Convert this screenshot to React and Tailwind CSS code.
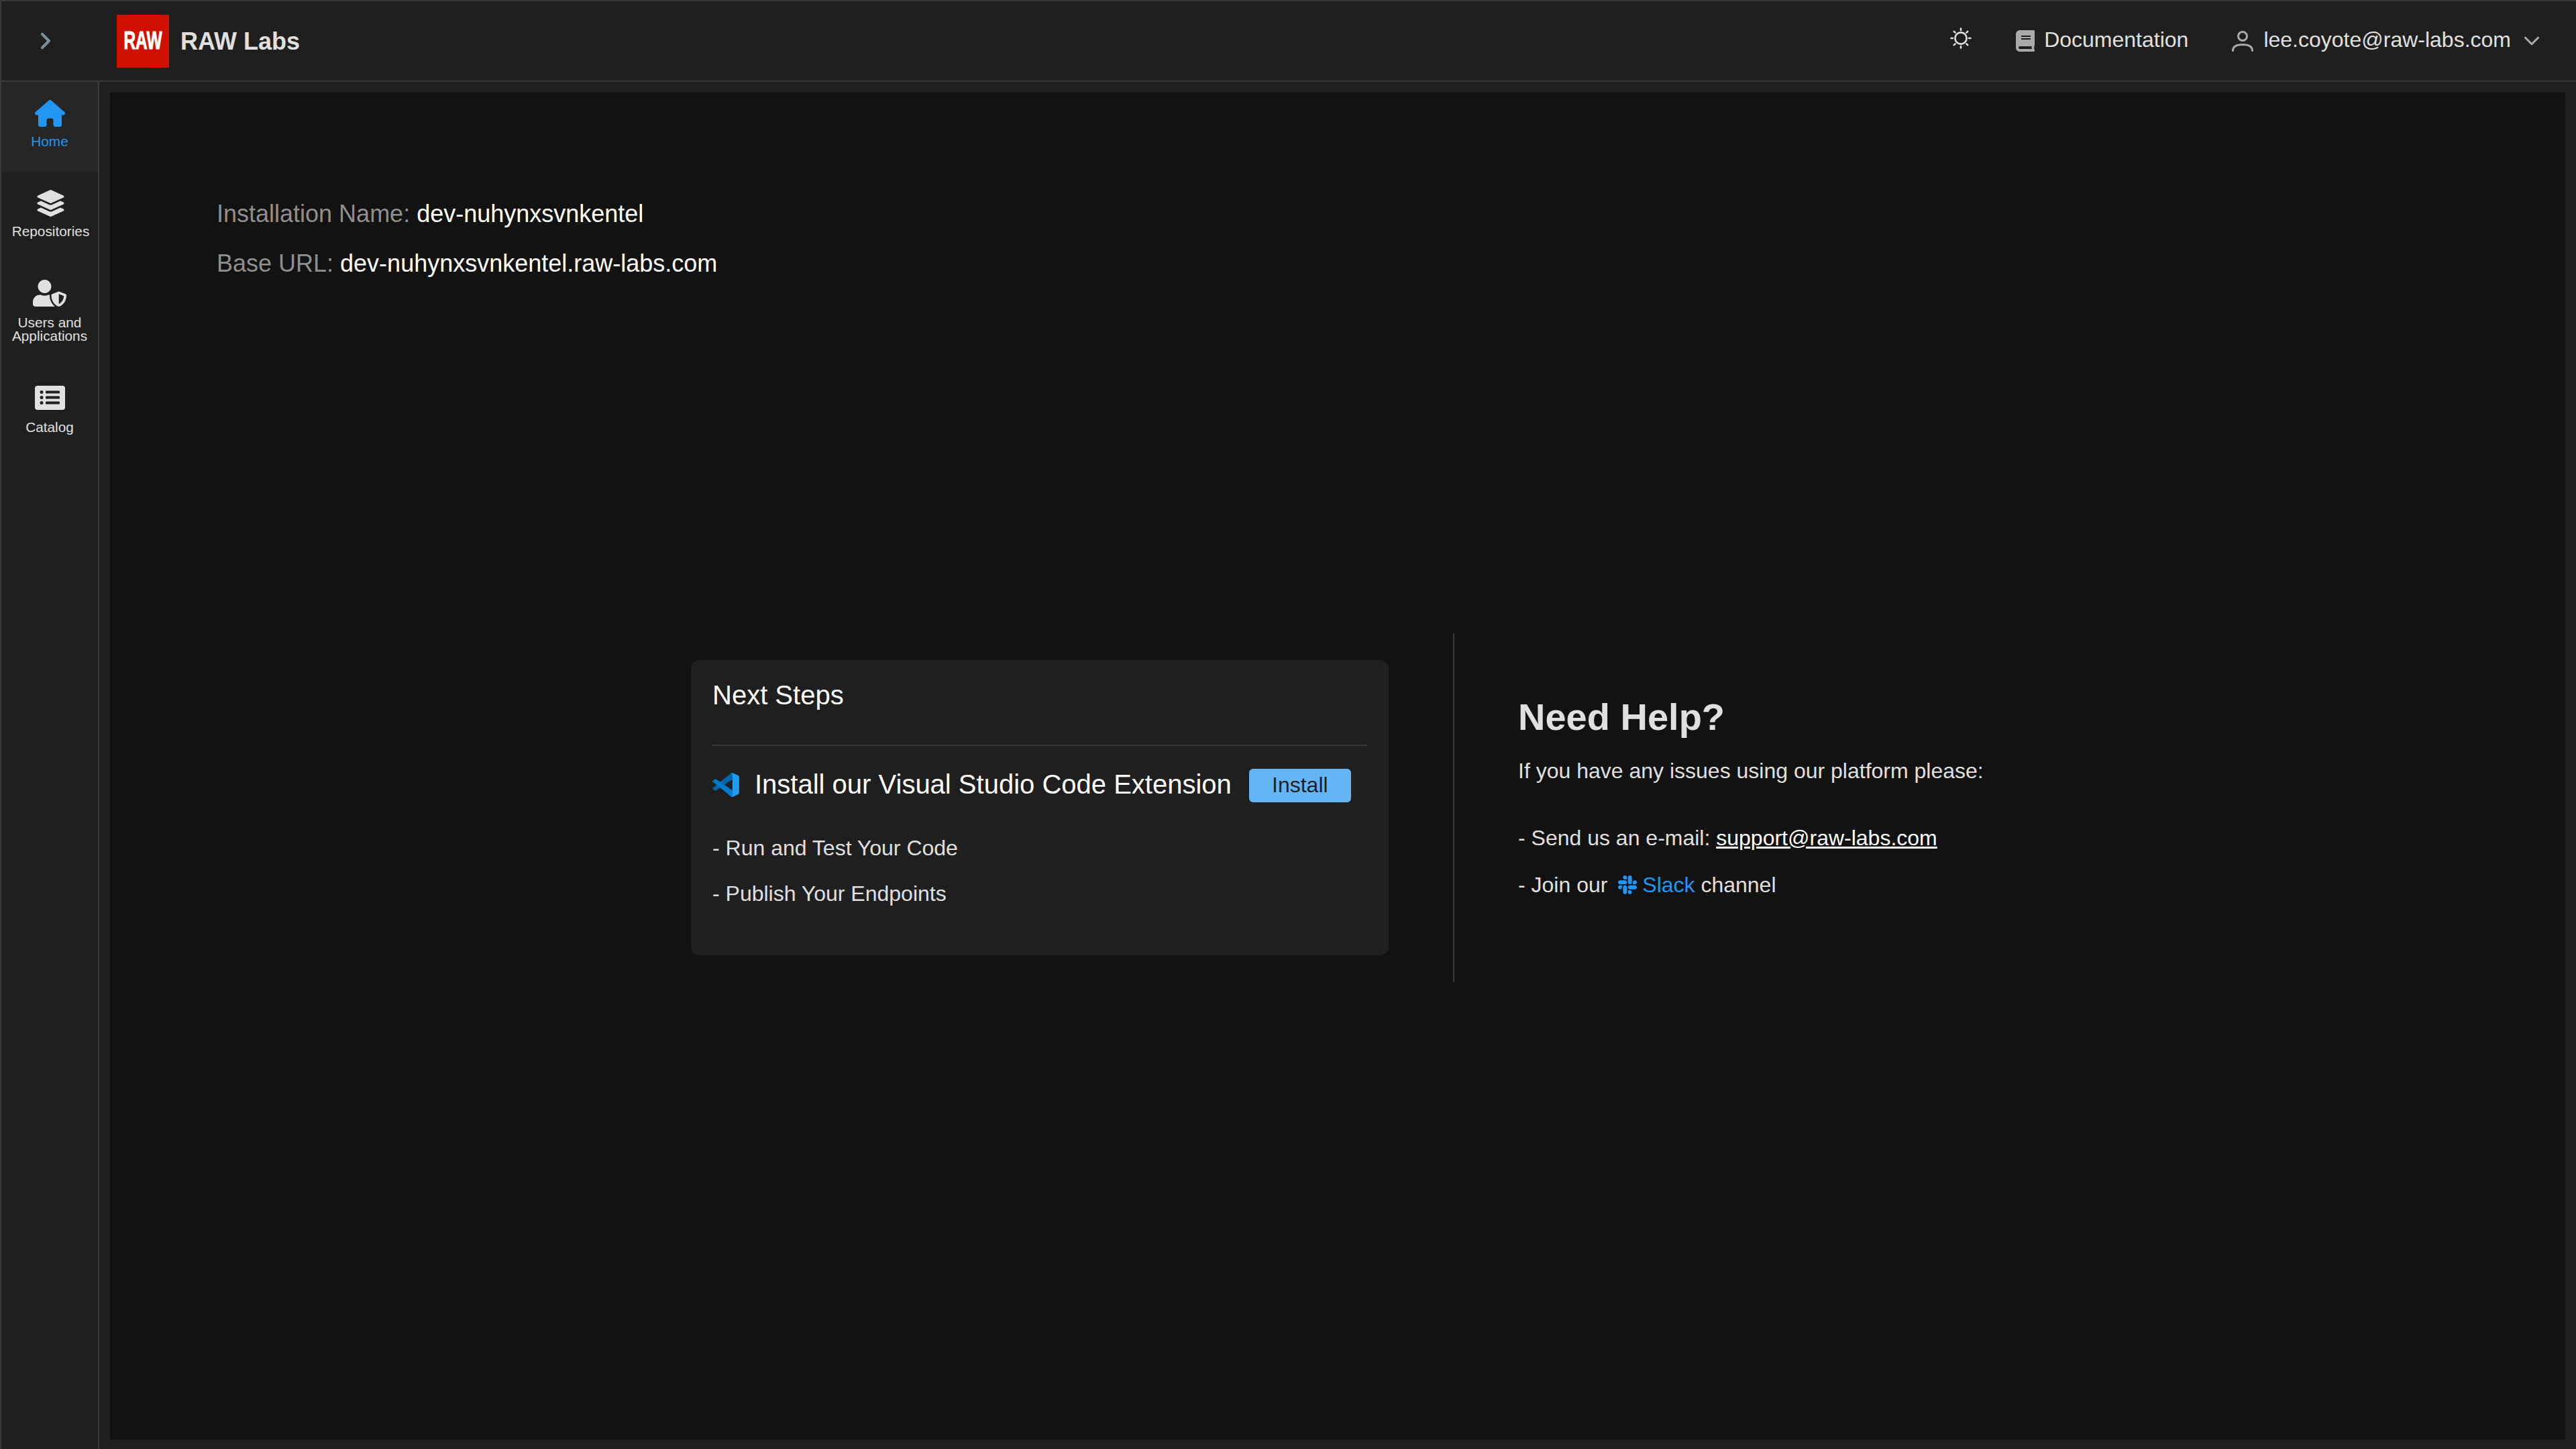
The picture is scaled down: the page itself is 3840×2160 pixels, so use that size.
import React from "react";
import { FaBook, FaLayerGroup, FaSlack, FaUserShield } from "react-icons/fa";
import { FaHouse } from "react-icons/fa6";
import { LuChevronDown, LuChevronRight } from "react-icons/lu";

function VsCodeIcon() {
  return (
    <svg viewBox="0 0 100 100" preserveAspectRatio="none" className="w-[40px] h-[36px] mb-[2px]">
      <path fill="#0065a9" d="M96 10.8 75.4 1a6.2 6.2 0 0 0-7.1 1.2L2.7 62a4.2 4.2 0 0 0 0 6.2l5.5 5a4.2 4.2 0 0 0 5.3.2L94.7 11.9c2.7-2 6.6-.1 6.6 3.3v-.2a6.2 6.2 0 0 0-5.3-4.2z" />
      <path fill="#007acc" d="M96 89.2 75.4 99a6.2 6.2 0 0 1-7.1-1.2L2.7 38a4.2 4.2 0 0 1 0-6.2l5.5-5a4.2 4.2 0 0 1 5.3-.2l81.2 61.5c2.7 2 6.6.1 6.6-3.3v.2a6.2 6.2 0 0 1-5.3 4.2z" />
      <path fill="#1f9cf0" d="M75.4 99a6.2 6.2 0 0 1-7.1-1.2c2.3 2.3 6.2.7 6.2-2.6V4.8c0-3.3-3.9-4.9-6.2-2.6A6.2 6.2 0 0 1 75.4 1L96 10.9a6.2 6.2 0 0 1 3.5 5.6v67a6.2 6.2 0 0 1-3.5 5.6z" />
    </svg>
  );
}

function SunIcon() {
  return (
    <svg viewBox="0 0 32 32" fill="none" stroke="#e0e0e0" strokeWidth="2.6" strokeLinecap="round" className="w-[32px] h-[32px] mb-[8px]">
      <circle cx="16" cy="16" r="8.6" />
      <path d="M16 1.5v2.5M16 28v2.5M1.5 16H4M28 16h2.5M5.8 5.8l1.8 1.8M24.4 24.4l1.8 1.8M5.8 26.2l1.8-1.8M24.4 7.6l1.8-1.8" />
    </svg>
  );
}

function UserIcon() {
  return (
    <svg viewBox="0 0 32 32" fill="none" stroke="#aaaaaa" strokeWidth="3" strokeLinecap="round" className="w-[32px] h-[32px]">
      <circle cx="16" cy="9" r="6.5" />
      <path d="M1.5 30.5C1.5 24 7 21.5 16 21.5S30.5 24 30.5 30.5" />
    </svg>
  );
}

function CatalogIcon() {
  return (
    <svg viewBox="0 0 45 36" className="w-[45px] h-[36px]">
      <rect width="45" height="36" rx="4" fill="#e0e0e0" />
      <g fill="#1f1f1f">
        <circle cx="10" cy="9.5" r="2.5" />
        <circle cx="10" cy="17.5" r="2.5" />
        <circle cx="10" cy="25.5" r="2.5" />
        <rect x="16" y="7.5" width="21" height="4" rx="1" />
        <rect x="16" y="15.5" width="21" height="4" rx="1" />
        <rect x="16" y="23.5" width="21" height="4" rx="1" />
      </g>
    </svg>
  );
}

function NavItem({ icon, label, active, className }) {
  return (
    <div className={"flex flex-col items-center pt-[27px] text-[20.8px] leading-[20px] text-center " + (active ? "bg-[#262626] text-[#2196f3] " : "text-[#e0e0e0] ") + className}>
      {icon}
      <span>{label}</span>
    </div>
  );
}

export default function App() {
  return (
    <div className="w-[3840px] h-[2160px] flex flex-col bg-[#1f1f1f] border-t-2 border-l-2 border-[#3a3a3a] font-['Liberation_Sans',sans-serif] overflow-hidden">
      <header className="h-[120px] shrink-0 flex items-center border-b-2 border-[#3a3a3a]">
        <LuChevronRight className="w-[40px] h-[40px] ml-[46px] text-[#78909c]" strokeWidth={2.5} />
        <div className="ml-[86px] w-[78px] h-[79px] bg-[#d01100] flex items-center justify-center">
          <span className="text-white font-bold text-[36px] leading-none scale-x-[0.68] [-webkit-text-stroke:1px_white]">RAW</span>
        </div>
        <span className="ml-[17px] mt-[2px] text-[36px] font-bold text-[#e0e0e0]">RAW Labs</span>
        <div className="ml-auto flex items-center text-[32px] text-[#e0e0e0]">
          <SunIcon />
          <FaBook className="w-[28px] h-[32px] ml-[66px] mr-[14px] text-[#aaaaaa]" />
          <span className="mb-[5px]">Documentation</span>
          <span className="ml-[65px] mr-[15px]"><UserIcon /></span>
          <span className="mb-[5px]">lee.coyote@raw-labs.com</span>
          <LuChevronDown className="w-[38px] h-[38px] ml-[12px] mr-[47px] text-[#aaaaaa]" />
        </div>
      </header>

      <div className="flex flex-1 min-h-0">
        <nav className="w-[146px] shrink-0 border-r-2 border-[#3a3a3a] flex flex-col">
          <NavItem active label="Home" icon={<FaHouse className="w-[45px] h-[40px]" />} className="h-[134px] gap-[12px]" />
          <NavItem label="Repositories" icon={<FaLayerGroup className="w-[41px] h-[40px]" />} className="h-[134px] gap-[12px] pl-[3px]" />
          <NavItem label="Users and Applications" icon={<FaUserShield className="w-[50px] h-[40px]" />} className="h-[158px] gap-[14px]" />
          <NavItem label="Catalog" icon={<CatalogIcon />} className="gap-[16px]" />
        </nav>

        <main className="flex-1 min-w-0 pt-[16px] pl-[16px] pr-[16px] pb-[14px]">
          <div className="h-full bg-[#121212] pl-[159px] pt-[160px] flex flex-col">
            <p className="text-[36px] leading-[42px] text-[#8f8f8f]">Installation Name: <span className="text-white">dev-nuhynxsvnkentel</span></p>
            <p className="mt-[32px] text-[36px] leading-[42px] text-[#8f8f8f]">Base URL: <span className="text-white">dev-nuhynxsvnkentel.raw-labs.com</span></p>

            <div className="flex mt-[530px] ml-[707px]">
              <div className="w-[1040px] h-[440px] mt-[40px] bg-[#1f1f1f] rounded-[12px] px-[32px] pt-[28px]">
                <h2 className="text-[40px] leading-[48px] text-white">Next Steps</h2>
                <div className="h-[2px] bg-[#3a3a3a] mt-[50px]" />
                <div className="flex items-center mt-[32px]">
                  <VsCodeIcon />
                  <span className="ml-[23px] mb-[4px] text-[40px] leading-[50px] text-white">Install our Visual Studio Code Extension</span>
                  <button className="ml-[26px] w-[152px] h-[50px] pb-[4px] rounded-[6px] bg-[#64b5f6] text-[32px] text-[#1f1f1f]">Install</button>
                </div>
                <p className="mt-[46px] text-[32px] leading-[40px] text-[#e0e0e0]">- Run and Test Your Code</p>
                <p className="mt-[28px] text-[32px] leading-[40px] text-[#e0e0e0]">- Publish Your Endpoints</p>
              </div>
              <div className="w-[2px] h-[520px] bg-[#3a3a3a] ml-[96px]" />
              <div className="ml-[95px] pt-[93px]">
                <h2 className="text-[56px] leading-[64px] font-bold text-[#e0e0e0]">Need Help?</h2>
                <p className="mt-[28px] text-[32px] leading-[40px] text-[#e0e0e0]">If you have any issues using our platform please:</p>
                <p className="mt-[60px] text-[32px] leading-[40px] text-[#e0e0e0]">- Send us an e-mail: <span className="text-white underline">support@raw-labs.com</span></p>
                <p className="mt-[30px] text-[32px] leading-[40px] text-[#e0e0e0] flex items-center">
                  <span className="whitespace-pre">- Join our </span>
                  <FaSlack className="w-[28px] h-[32px] ml-[7px] mr-[8px] text-[#2196f3]" />
                  <span className="text-[#2196f3]">Slack</span>
                  <span className="whitespace-pre"> channel</span>
                </p>
              </div>
            </div>
          </div>
        </main>
      </div>
    </div>
  );
}
